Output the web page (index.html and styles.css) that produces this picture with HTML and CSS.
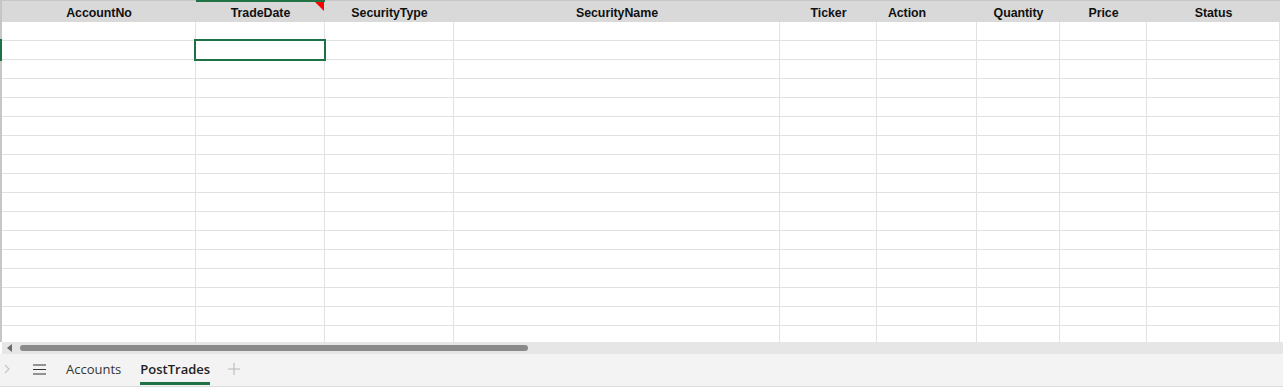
FILE: index.html
```html
<!DOCTYPE html>
<html>
<head>
<meta charset="utf-8">
<link rel="stylesheet" href="styles.css">
</head>
<body>
<div class="app">
  <div class="sheet">
    <div class="grid">
      <div class="hcell">AccountNo</div>
      <div class="hcell active">TradeDate<span class="note"></span></div>
      <div class="hcell">SecurityType</div>
      <div class="hcell">SecurityName</div>
      <div class="hcell">Ticker</div>
      <div class="hcell shifted">Action</div>
      <div class="hcell">Quantity</div>
      <div class="hcell">Price</div>
      <div class="hcell">Status</div>
    </div>
    <div class="body" id="body"></div>
  </div>
  <div class="row-indicator"></div>
  <div class="hscroll">
    <span class="arrow"></span>
    <div class="thumb"></div>
  </div>
  <div class="tabbar">
    <span class="chev">
      <svg width="6" height="10" viewBox="0 0 6 10"><path d="M1 1 L5 5 L1 9" fill="none" stroke="#c4c4c4" stroke-width="1.1"/></svg>
    </span>
    <span class="menu">
      <svg width="13" height="11" viewBox="0 0 13 11"><path d="M0 1H13M0 5.5H13M0 10H13" stroke="#333" stroke-width="1.2"/></svg>
    </span>
    <span class="tab first">Accounts</span>
    <span class="tab current">PostTrades</span>
    <span class="plus">
      <svg width="12" height="12" viewBox="0 0 12 12"><path d="M6 0V12M0 6H12" stroke="#b8b8b8" stroke-width="1.1"/></svg>
    </span>
  </div>
</div>
<script>
  var b = document.getElementById('body');
  var html = '';
  for (var r = 0; r < 17; r++) {
    html += '<div class="grid row">';
    for (var c = 0; c < 9; c++) {
      html += '<div class="cell' + (r === 1 && c === 1 ? ' sel' : '') + '"></div>';
    }
    html += '</div>';
  }
  b.innerHTML = html;
</script>
</body>
</html>
```

FILE: styles.css
```css
html, body {
  margin: 0;
  padding: 0;
  background: #ffffff;
}
.app {
  position: relative;
  width: 1283px;
  height: 390px;
  overflow: hidden;
  font-family: "Liberation Sans", Arial, sans-serif;
}
.sheet {
  border-left: 2px solid #c6c6c6;
  height: 342px;
  overflow: hidden;
  box-sizing: border-box;
}
.grid {
  display: grid;
  grid-template-columns: 194px 129px 129px 326px 97px 100px 83px 87px 133px;
}
.hcell {
  position: relative;
  height: 22px;
  background: #d9d9d9;
  border-top: 1px solid #c6c6c6;
  font-weight: bold;
  font-size: 12.4px;
  color: #111;
  display: flex;
  align-items: center;
  justify-content: center;
  box-sizing: border-box;
  padding-top: 2px;
  letter-spacing: -0.05px;
}
.hcell.shifted {
  padding-right: 40px;
}
.hcell.active {
  border-top: 2px solid #217346;
  padding-top: 1px;
}
.note {
  position: absolute;
  top: 0;
  right: 1px;
  width: 0;
  height: 0;
  border-top: 9px solid #ff0000;
  border-left: 9px solid transparent;
}
.body {
  height: 320px;
  overflow: hidden;
}
.row .cell {
  height: 19px;
  box-sizing: border-box;
  border-right: 1px solid #e1e1e1;
  border-bottom: 1px solid #e1e1e1;
  position: relative;
}
.row .cell.sel::after {
  content: "";
  position: absolute;
  left: -2px;
  top: -2px;
  width: 132px;
  height: 22px;
  box-sizing: border-box;
  border: 2px solid #1e7145;
  z-index: 2;
}
.row-indicator {
  position: absolute;
  left: 0;
  top: 39px;
  width: 2px;
  height: 22px;
  background: #1e7145;
}
.hscroll {
  height: 12px;
  background: #e6e6e6;
  margin-left: 2px;
  display: flex;
  align-items: center;
  box-sizing: border-box;
}
.hscroll .arrow {
  width: 0;
  height: 0;
  border-top: 4px solid transparent;
  border-bottom: 4px solid transparent;
  border-right: 5px solid #6b6b6b;
  margin-left: 5px;
}
.hscroll .thumb {
  margin-left: 8px;
  width: 508px;
  height: 6px;
  border-radius: 3px;
  background: #8a8a8a;
}
.tabbar {
  height: 32px;
  background: #f3f3f3;
  border-bottom: 1px solid #dcdcdc;
  display: flex;
  align-items: center;
  font-family: "Open Sans", "Noto Sans", sans-serif;
  font-size: 13px;
  color: #333;
}
.chev {
  display: flex;
  margin-left: 4px;
  width: 6px;
  margin-top: -2px;
}
.menu {
  display: flex;
  margin-left: 23px;
  margin-top: -2px;
}
.tab {
  height: 32px;
  display: flex;
  align-items: center;
  box-sizing: border-box;
  padding-bottom: 3px;
}
.tab.first {
  margin-left: 20px;
}
.tab.current {
  margin-left: 19px;
  font-weight: 600;
  color: #222;
  position: relative;
}
.tab.current::after {
  content: "";
  position: absolute;
  left: 0;
  right: 0;
  bottom: 1px;
  height: 3px;
  background: #217346;
}
.plus {
  display: flex;
  margin-left: 18px;
  margin-top: -2px;
}
```
